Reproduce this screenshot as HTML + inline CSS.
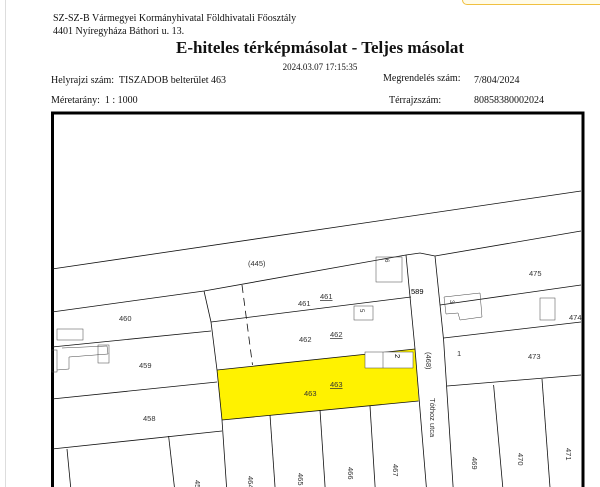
<!DOCTYPE html>
<html><head><meta charset="utf-8"><style>
html,body{margin:0;width:600px;height:487px;overflow:hidden}
body{background:#fff;position:relative;font-family:"Liberation Serif",serif;color:#111}
.t{position:absolute;white-space:nowrap;font-size:10px}
</style></head><body>
<div style="position:absolute;left:5px;top:0;width:1px;height:487px;background:#ddd"></div>
<div style="position:absolute;left:462px;top:-8px;width:150px;height:11px;border:1px solid #f0c040;border-radius:5px;background:#fffbe8"></div>
<div class="t" style="left:53px;top:13px">SZ-SZ-B Vármegyei Kormányhivatal Földhivatali Főosztály</div>
<div class="t" style="left:53px;top:26px">4401 Nyíregyháza Báthori u. 13.</div>
<div class="t" style="left:70px;width:500px;text-align:center;top:38px;font-size:17px;font-weight:bold">E-hiteles térképmásolat - Teljes másolat</div>
<div class="t" style="left:70px;width:500px;text-align:center;top:62px;font-size:9px">2024.03.07 17:15:35</div>
<div class="t" style="left:51px;top:75px">Helyrajzi szám:&nbsp; TISZADOB belterület 463</div>
<div class="t" style="left:383px;top:73px">Megrendelés szám:</div>
<div class="t" style="left:474px;top:75px">7/804/2024</div>
<div class="t" style="left:51px;top:95px">Méretarány:&nbsp; 1 : 1000</div>
<div class="t" style="left:389px;top:95px">Térrajzszám:</div>
<div class="t" style="left:474px;top:95px">80858380002024</div>
<svg width="600" height="487" style="position:absolute;left:0;top:0" font-family="Liberation Sans,sans-serif" font-size="7.5" fill="none">
<polygon points="217,370 415,349 418.6,401 222,420" fill="#fff200"/>
<rect x="52.5" y="113" width="530.5" height="400" stroke="#000" stroke-width="3"/>
<g stroke="#111" stroke-width="0.8">
<line x1="52" y1="269" x2="581" y2="191"/>
<polyline points="52,312 204,291 406,255 420,253 435,256 581,231"/>
<polyline points="406,255 415,349 427.5,501"/>
<polyline points="435,256 443.6,340 454,501"/>
<polyline points="204,291 211,322 217,370 222,420 227.5,501"/>
<line x1="211" y1="322" x2="411" y2="297"/>
<line x1="217" y1="370" x2="415" y2="349"/>
<line x1="222" y1="420" x2="418.6" y2="401"/>
<line x1="52" y1="347" x2="211" y2="331"/>
<line x1="52" y1="399" x2="217" y2="382"/>
<line x1="52" y1="449" x2="222" y2="431"/>
<line x1="67" y1="449" x2="72" y2="501"/>
<line x1="168.6" y1="436" x2="176" y2="501"/>
<line x1="270" y1="415" x2="276" y2="501"/>
<line x1="320" y1="410" x2="326" y2="501"/>
<line x1="370" y1="406" x2="376" y2="501"/>
<line x1="440" y1="305" x2="581" y2="285"/>
<line x1="443.6" y1="338" x2="581" y2="322"/>
<line x1="447" y1="386" x2="581" y2="375"/>
<line x1="493.6" y1="385" x2="504" y2="501"/>
<line x1="542" y1="379" x2="551" y2="501"/>
<line x1="242" y1="285" x2="252.5" y2="365" stroke-dasharray="8,5"/>
</g>
<g stroke="#444" stroke-width="0.5">
<rect x="376" y="257" width="26" height="25"/>
<rect x="354" y="306" width="19" height="14"/>
<rect x="365" y="352" width="48" height="16" fill="#fff"/>
<line x1="383" y1="352" x2="383" y2="368"/>
<polyline points="444,297 480,293 482,317 460,320 458,313 446,314 444,297"/>
<rect x="540" y="298" width="15" height="22"/>
<rect x="57" y="329" width="26" height="11"/>
<polyline points="62,348 107,346 108,354 69,357 69,369 57,370"/>
<rect x="52" y="350" width="5" height="22"/>
<rect x="98" y="345" width="11" height="18"/>
</g>
<g fill="#333">
<text x="248" y="266">(445)</text>
<text x="529" y="276">475</text>
<text x="298" y="306">461</text>
<text x="320" y="299" text-decoration="underline">461</text>
<text x="411" y="294" fill="#000">589</text>
<text x="569" y="320">474</text>
<text x="119" y="321">460</text>
<text x="299" y="342">462</text>
<text x="330" y="337" text-decoration="underline">462</text>
<text x="139" y="368">459</text>
<text x="304" y="396">463</text>
<text x="330" y="387" text-decoration="underline">463</text>
<text x="143" y="421">458</text>
<text x="457" y="356">1</text>
<text x="528" y="359">473</text>
<text x="385" y="259" transform="rotate(90 385 259)" font-size="6">6</text>
<text x="360" y="309" transform="rotate(90 360 309)" font-size="6">5</text>
<text x="395" y="354" transform="rotate(90 395 354)" fill="#000">2</text>
<text x="450" y="300" transform="rotate(90 450 300)" font-size="6">3</text>
<text x="426" y="352" transform="rotate(90 426 352)">(468)</text>
<text x="430" y="398" transform="rotate(90 430 398)">Tóthoz utca</text>
<text x="472" y="457" transform="rotate(90 472 457)">469</text>
<text x="518" y="453" transform="rotate(90 518 453)">470</text>
<text x="566" y="448" transform="rotate(90 566 448)">471</text>
<text x="248" y="476" transform="rotate(90 248 476)">464</text>
<text x="298" y="473" transform="rotate(90 298 473)">465</text>
<text x="348" y="467" transform="rotate(90 348 467)">466</text>
<text x="393" y="464" transform="rotate(90 393 464)">467</text>
<text x="195" y="480" transform="rotate(90 195 480)">457</text>
<text x="122" y="487" transform="rotate(90 122 487)">45</text>
</g>
</svg>
</body></html>
